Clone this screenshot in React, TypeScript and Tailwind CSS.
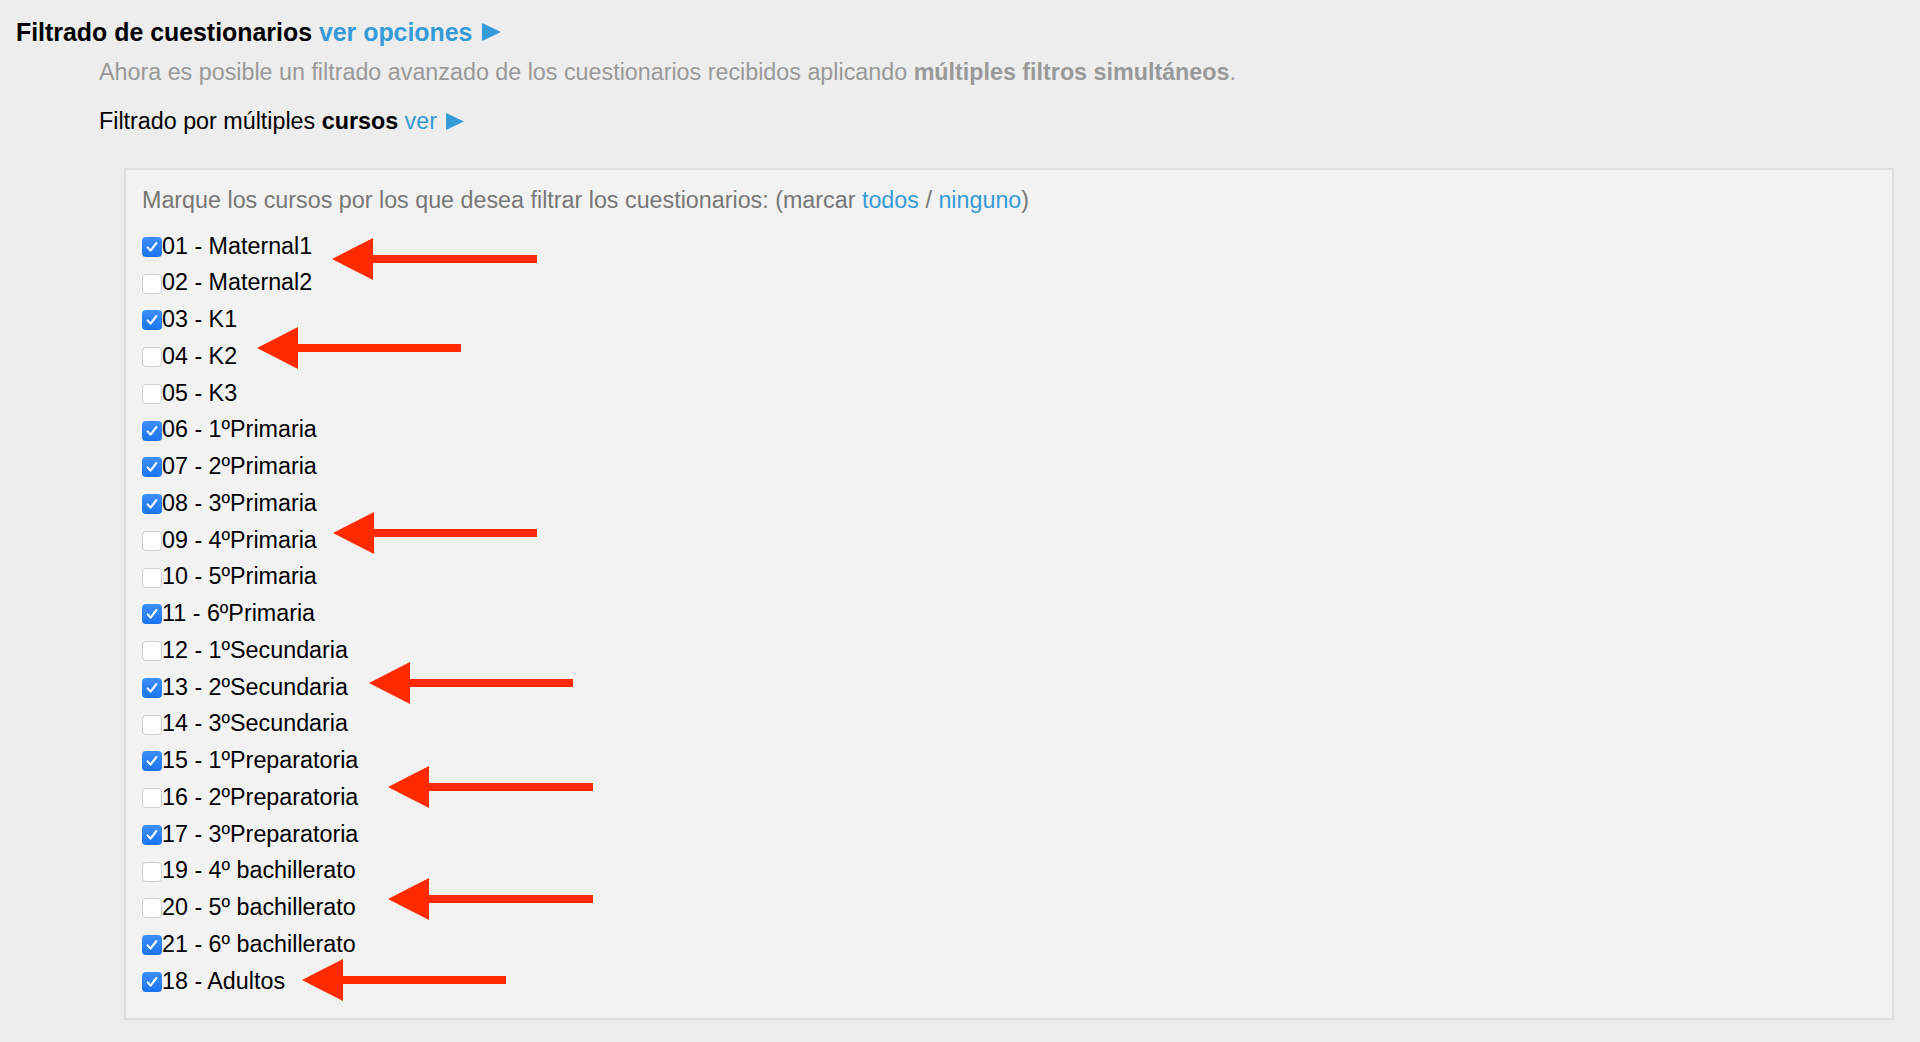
import React from "react";

type Curso = { label: string; checked: boolean };

const cursos: Curso[] = [
  { label: "01 - Maternal1", checked: true },
  { label: "02 - Maternal2", checked: false },
  { label: "03 - K1", checked: true },
  { label: "04 - K2", checked: false },
  { label: "05 - K3", checked: false },
  { label: "06 - 1ºPrimaria", checked: true },
  { label: "07 - 2ºPrimaria", checked: true },
  { label: "08 - 3ºPrimaria", checked: true },
  { label: "09 - 4ºPrimaria", checked: false },
  { label: "10 - 5ºPrimaria", checked: false },
  { label: "11 - 6ºPrimaria", checked: true },
  { label: "12 - 1ºSecundaria", checked: false },
  { label: "13 - 2ºSecundaria", checked: true },
  { label: "14 - 3ºSecundaria", checked: false },
  { label: "15 - 1ºPreparatoria", checked: true },
  { label: "16 - 2ºPreparatoria", checked: false },
  { label: "17 - 3ºPreparatoria", checked: true },
  { label: "19 - 4º bachillerato", checked: false },
  { label: "20 - 5º bachillerato", checked: false },
  { label: "21 - 6º bachillerato", checked: true },
  { label: "18 - Adultos", checked: true },
];

// tip x, tip y, tail x (page coordinates — annotations drawn over the screenshot)
const arrows: [number, number, number][] = [
  [332, 259, 537],
  [257, 348, 461],
  [333, 533, 537],
  [369, 683, 573],
  [388, 787, 593],
  [388, 899, 593],
  [302, 980, 506],
];

const Triangle = ({ className }: { className?: string }) => (
  <svg viewBox="0 0 18 17" className={className}>
    <polygon points="0,0 18,8.5 0,17" fill="#359bd6" />
  </svg>
);

const Checkbox = ({ checked }: { checked: boolean }) =>
  checked ? (
    <span className="mt-[2px] flex size-[20px] shrink-0 items-center justify-center rounded-[4px] bg-linear-to-b from-[#3d90f8] to-[#1a74f0]">
      <svg viewBox="0 0 20 20" className="size-[16px]">
        <path
          d="M4.5 10.5 L8.2 14.5 L15.5 5"
          fill="none"
          stroke="white"
          strokeWidth="2.6"
          strokeLinecap="round"
          strokeLinejoin="round"
        />
      </svg>
    </span>
  ) : (
    <span className="mt-[2px] size-[20px] shrink-0 rounded-[4px] border border-[#cfcfcf] bg-white" />
  );

export default function App() {
  return (
    <div className="relative min-h-[1042px] w-full bg-[#ededed] pt-[17px] pb-[24px] font-['Liberation_Sans',Arial,sans-serif] text-[23.3px] text-black">
      <h2 className="flex items-center pl-[16px] text-[24.9px] leading-[30px] font-bold">
        Filtrado de cuestionarios&nbsp;
        <span className="text-[#359bd6]">ver opciones</span>
        <Triangle className="ml-[10px] h-[18px] w-[19px]" />
      </h2>

      <p className="mt-[11px] pl-[99px] leading-[28px] text-[#999999]">
        Ahora es posible un filtrado avanzado de los cuestionarios recibidos aplicando{" "}
        <b>múltiples filtros simultáneos</b>.
      </p>

      <div className="mt-[21px] flex items-center pl-[99px] leading-[28px]">
        Filtrado por múltiples&nbsp;<b>cursos</b>&nbsp;
        <span className="text-[#359bd6]">ver</span>
        <Triangle className="ml-[9px] h-[17px] w-[18px]" />
      </div>

      <div className="mt-[33px] mr-[26px] ml-[124px] border-2 border-[#dedede] bg-[#f2f2f2] px-[16px] pt-[16px] pb-[19px]">
        <div className="leading-[28px] text-[#777777]">
          Marque los cursos por los que desea filtrar los cuestionarios: (marcar{" "}
          <span className="text-[#359bd6]">todos</span> /{" "}
          <span className="text-[#359bd6]">ninguno</span>)
        </div>
        <ul className="mt-[13.6px] flex flex-col">
          {cursos.map((c) => (
            <li key={c.label} className="flex h-[36.75px] items-center">
              <Checkbox checked={c.checked} />
              <span>{c.label}</span>
            </li>
          ))}
        </ul>
      </div>

      <svg
        className="pointer-events-none absolute top-0 left-0"
        width="1920"
        height="1042"
      >
        {arrows.map(([tx, ty, ex]) => (
          <polygon
            key={`${tx}-${ty}`}
            fill="#ff2a00"
            points={`${tx},${ty} ${tx + 41},${ty - 21} ${tx + 41},${ty - 4} ${ex},${ty - 4} ${ex},${ty + 4} ${tx + 41},${ty + 4} ${tx + 41},${ty + 21}`}
          />
        ))}
      </svg>
    </div>
  );
}
